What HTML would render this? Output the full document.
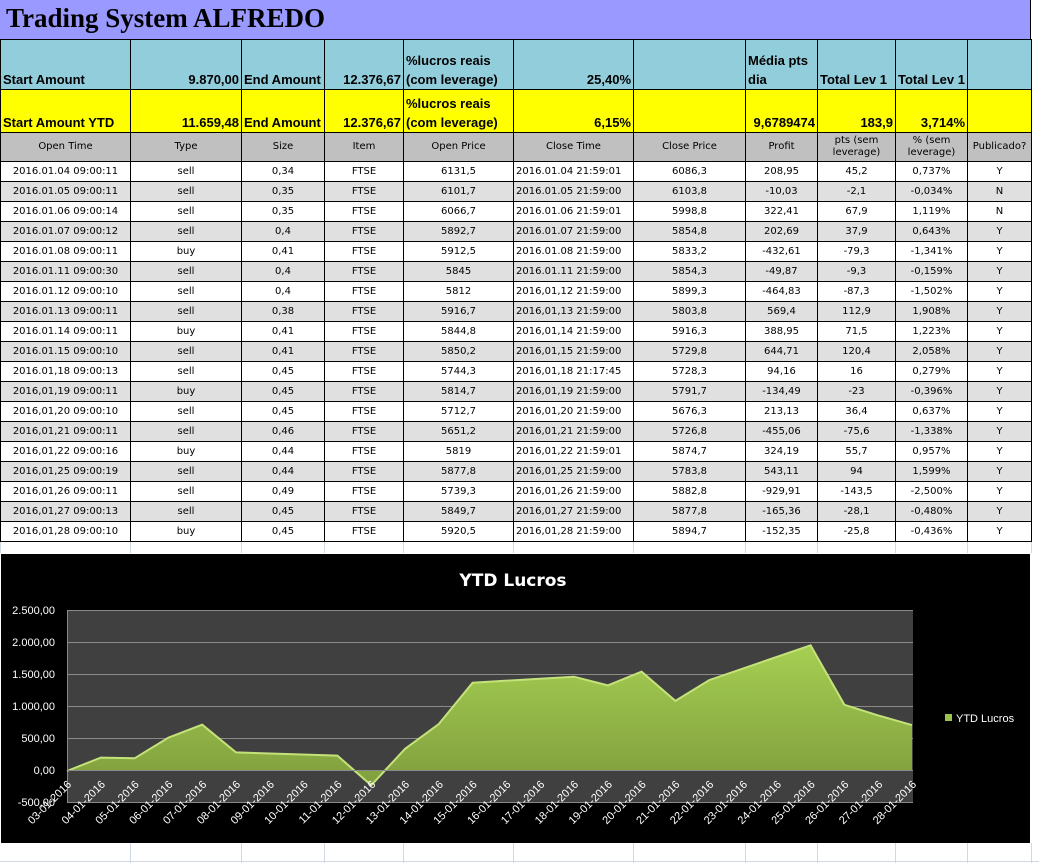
<!DOCTYPE html>
<html><head><meta charset="utf-8"><style>
body{margin:0;width:1039px;height:863px;background:#fff;position:relative;overflow:hidden;font-family:"DejaVu Sans","Liberation Sans",sans-serif}
.title{position:absolute;left:0;top:0;width:1031px;height:39px;background:#9999ff;border-right:1px solid #000;box-sizing:border-box}
.title span{position:absolute;left:6px;top:3px;font:bold 27px "Liberation Serif",serif;color:#000}
table{position:absolute;left:0;top:39px;border-collapse:collapse;table-layout:fixed;width:1032px}
td{border:1px solid #000;padding:0 2px;font-size:10px;text-align:center;white-space:nowrap;overflow:hidden;height:19px;line-height:12px}
tr.b td,tr.y td{vertical-align:bottom;font-weight:bold;font-size:13px;line-height:19px;text-align:left;white-space:nowrap;font-family:"Liberation Sans",sans-serif}
tr.b td{background:#92cddc;height:49px}
tr.y td{background:#ffff00;height:42px}
tr.b td.w,tr.y td.w{white-space:normal}
tr.b td.r,tr.y td.r{text-align:right}
tr.h td{background:#c0c0c0;height:28px;font-size:10px;line-height:12px;white-space:normal}
tr.g td{background:#e0e0e0}
td.l{text-align:left}
tr.e td{border:none;border-left:1px solid #d0d7e5;height:11px}
</style></head><body>
<div class="title"><span>Trading System ALFREDO</span></div>
<table>
<colgroup><col style="width:130px"><col style="width:111px"><col style="width:83px"><col style="width:79px"><col style="width:110px"><col style="width:120px"><col style="width:112px"><col style="width:72px"><col style="width:78px"><col style="width:72px"><col style="width:64px"></colgroup>
<tr class="b"><td>Start Amount</td><td class="r">9.870,00</td><td>End Amount</td><td class="r">12.376,67</td><td class="w">%lucros reais (com leverage)</td><td class="r">25,40%</td><td></td><td class="w">Média pts dia</td><td>Total Lev 1</td><td>Total Lev 1</td><td></td></tr>
<tr class="y"><td>Start Amount YTD</td><td class="r">11.659,48</td><td>End Amount</td><td class="r">12.376,67</td><td class="w">%lucros reais (com leverage)</td><td class="r">6,15%</td><td></td><td class="r">9,6789474</td><td class="r">183,9</td><td class="r">3,714%</td><td></td></tr>
<tr class="h"><td>Open Time</td><td>Type</td><td>Size</td><td>Item</td><td>Open Price</td><td>Close Time</td><td>Close Price</td><td>Profit</td><td>pts (sem leverage)</td><td>% (sem leverage)</td><td>Publicado?</td></tr>
<tr><td>2016.01.04 09:00:11</td><td>sell</td><td>0,34</td><td>FTSE</td><td>6131,5</td><td class="l">2016.01.04 21:59:01</td><td>6086,3</td><td>208,95</td><td>45,2</td><td>0,737%</td><td>Y</td></tr>
<tr class="g"><td>2016.01.05 09:00:11</td><td>sell</td><td>0,35</td><td>FTSE</td><td>6101,7</td><td class="l">2016.01.05 21:59:00</td><td>6103,8</td><td>-10,03</td><td>-2,1</td><td>-0,034%</td><td>N</td></tr>
<tr><td>2016.01.06 09:00:14</td><td>sell</td><td>0,35</td><td>FTSE</td><td>6066,7</td><td class="l">2016.01.06 21:59:01</td><td>5998,8</td><td>322,41</td><td>67,9</td><td>1,119%</td><td>N</td></tr>
<tr class="g"><td>2016.01.07 09:00:12</td><td>sell</td><td>0,4</td><td>FTSE</td><td>5892,7</td><td class="l">2016.01.07 21:59:00</td><td>5854,8</td><td>202,69</td><td>37,9</td><td>0,643%</td><td>Y</td></tr>
<tr><td>2016.01.08 09:00:11</td><td>buy</td><td>0,41</td><td>FTSE</td><td>5912,5</td><td class="l">2016.01.08 21:59:00</td><td>5833,2</td><td>-432,61</td><td>-79,3</td><td>-1,341%</td><td>Y</td></tr>
<tr class="g"><td>2016.01.11 09:00:30</td><td>sell</td><td>0,4</td><td>FTSE</td><td>5845</td><td class="l">2016.01.11 21:59:00</td><td>5854,3</td><td>-49,87</td><td>-9,3</td><td>-0,159%</td><td>Y</td></tr>
<tr><td>2016.01.12 09:00:10</td><td>sell</td><td>0,4</td><td>FTSE</td><td>5812</td><td class="l">2016,01,12 21:59:00</td><td>5899,3</td><td>-464,83</td><td>-87,3</td><td>-1,502%</td><td>Y</td></tr>
<tr class="g"><td>2016.01.13 09:00:11</td><td>sell</td><td>0,38</td><td>FTSE</td><td>5916,7</td><td class="l">2016,01,13 21:59:00</td><td>5803,8</td><td>569,4</td><td>112,9</td><td>1,908%</td><td>Y</td></tr>
<tr><td>2016.01.14 09:00:11</td><td>buy</td><td>0,41</td><td>FTSE</td><td>5844,8</td><td class="l">2016,01,14 21:59:00</td><td>5916,3</td><td>388,95</td><td>71,5</td><td>1,223%</td><td>Y</td></tr>
<tr class="g"><td>2016.01.15 09:00:10</td><td>sell</td><td>0,41</td><td>FTSE</td><td>5850,2</td><td class="l">2016,01,15 21:59:00</td><td>5729,8</td><td>644,71</td><td>120,4</td><td>2,058%</td><td>Y</td></tr>
<tr><td>2016.01,18 09:00:13</td><td>sell</td><td>0,45</td><td>FTSE</td><td>5744,3</td><td class="l">2016,01,18 21:17:45</td><td>5728,3</td><td>94,16</td><td>16</td><td>0,279%</td><td>Y</td></tr>
<tr class="g"><td>2016,01,19 09:00:11</td><td>buy</td><td>0,45</td><td>FTSE</td><td>5814,7</td><td class="l">2016,01,19 21:59:00</td><td>5791,7</td><td>-134,49</td><td>-23</td><td>-0,396%</td><td>Y</td></tr>
<tr><td>2016,01,20 09:00:10</td><td>sell</td><td>0,45</td><td>FTSE</td><td>5712,7</td><td class="l">2016,01,20 21:59:00</td><td>5676,3</td><td>213,13</td><td>36,4</td><td>0,637%</td><td>Y</td></tr>
<tr class="g"><td>2016,01,21 09:00:11</td><td>sell</td><td>0,46</td><td>FTSE</td><td>5651,2</td><td class="l">2016,01,21 21:59:00</td><td>5726,8</td><td>-455,06</td><td>-75,6</td><td>-1,338%</td><td>Y</td></tr>
<tr><td>2016,01,22 09:00:16</td><td>buy</td><td>0,44</td><td>FTSE</td><td>5819</td><td class="l">2016,01,22 21:59:01</td><td>5874,7</td><td>324,19</td><td>55,7</td><td>0,957%</td><td>Y</td></tr>
<tr class="g"><td>2016,01,25 09:00:19</td><td>sell</td><td>0,44</td><td>FTSE</td><td>5877,8</td><td class="l">2016,01,25 21:59:00</td><td>5783,8</td><td>543,11</td><td>94</td><td>1,599%</td><td>Y</td></tr>
<tr><td>2016,01,26 09:00:11</td><td>sell</td><td>0,49</td><td>FTSE</td><td>5739,3</td><td class="l">2016,01,26 21:59:00</td><td>5882,8</td><td>-929,91</td><td>-143,5</td><td>-2,500%</td><td>Y</td></tr>
<tr class="g"><td>2016,01,27 09:00:13</td><td>sell</td><td>0,45</td><td>FTSE</td><td>5849,7</td><td class="l">2016,01,27 21:59:00</td><td>5877,8</td><td>-165,36</td><td>-28,1</td><td>-0,480%</td><td>Y</td></tr>
<tr><td>2016,01,28 09:00:10</td><td>buy</td><td>0,45</td><td>FTSE</td><td>5920,5</td><td class="l">2016,01,28 21:59:00</td><td>5894,7</td><td>-152,35</td><td>-25,8</td><td>-0,436%</td><td>Y</td></tr>
<tr class="e"><td></td><td></td><td></td><td></td><td></td><td></td><td></td><td></td><td></td><td></td><td style="border-right:1px solid #d0d7e5"></td></tr>
</table>
<svg width="1039" height="20" style="position:absolute;top:843px;left:0">
<g stroke="#d0d7e5"><line x1="0" y1="18.5" x2="1039" y2="18.5"/><line x1="130.5" y1="0" x2="130.5" y2="20"/><line x1="241.5" y1="0" x2="241.5" y2="20"/><line x1="324.5" y1="0" x2="324.5" y2="20"/><line x1="403.5" y1="0" x2="403.5" y2="20"/><line x1="513.5" y1="0" x2="513.5" y2="20"/><line x1="633.5" y1="0" x2="633.5" y2="20"/><line x1="745.5" y1="0" x2="745.5" y2="20"/><line x1="817.5" y1="0" x2="817.5" y2="20"/><line x1="895.5" y1="0" x2="895.5" y2="20"/><line x1="967.5" y1="0" x2="967.5" y2="20"/><line x1="1031.5" y1="0" x2="1031.5" y2="20"/></g>
</svg>
<svg width="1039" height="290" style="position:absolute;left:0;top:553px" viewBox="0 553 1039 290">
<defs><linearGradient id="gf" x1="0" y1="0" x2="0" y2="1"><stop offset="0" stop-color="#a6cf52"/><stop offset="1" stop-color="#809e3e"/></linearGradient></defs>
<rect x="1" y="554" width="1029" height="289" fill="#000"/>
<rect x="67" y="610" width="846" height="193" fill="#404040"/>
<g stroke="#8a8a8a" stroke-width="1"><line x1="67" y1="610.5" x2="913" y2="610.5"/><line x1="67" y1="642.5" x2="913" y2="642.5"/><line x1="67" y1="674.5" x2="913" y2="674.5"/><line x1="67" y1="706.5" x2="913" y2="706.5"/><line x1="67" y1="738.5" x2="913" y2="738.5"/><line x1="67" y1="802.5" x2="913" y2="802.5"/><line x1="67.5" y1="610" x2="67.5" y2="803"/></g>
<polygon fill="url(#gf)" points="67,771 100.8,757.6 134.6,758.3 168.4,737.7 202.2,724.7 236,752.4 337.4,755.6 371.2,785.3 405,748.9 438.8,724 472.6,682.7 574,676.7 607.8,685.4 641.6,671.7 675.4,700.9 709.2,680.1 810.6,645.3 844.4,704.8 878.2,715.4 912,725.1 912,771"/>
<polyline fill="none" stroke="#c4e27a" stroke-width="2" points="67,771 100.8,757.6 134.6,758.3 168.4,737.7 202.2,724.7 236,752.4 337.4,755.6 371.2,785.3 405,748.9 438.8,724 472.6,682.7 574,676.7 607.8,685.4 641.6,671.7 675.4,700.9 709.2,680.1 810.6,645.3 844.4,704.8 878.2,715.4 912,725.1"/>
<line x1="67" y1="770.5" x2="913" y2="770.5" stroke="#8a8a8a"/>
<g font-family="Liberation Sans,sans-serif" font-size="11" fill="#fff" text-anchor="end">
<text x="55" y="614">2.500,00</text><text x="55" y="646">2.000,00</text><text x="55" y="678">1.500,00</text><text x="55" y="710">1.000,00</text><text x="55" y="742">500,00</text><text x="55" y="774">0,00</text><text x="55" y="806">-500,00</text>
</g>
<g font-family="Liberation Sans,sans-serif" font-size="11" fill="#fff" text-anchor="end" id="xl"></g>
<text x="513" y="586" font-family="DejaVu Sans,sans-serif" font-weight="bold" font-size="17" fill="#fff" text-anchor="middle">YTD Lucros</text>
<rect x="945" y="714" width="7" height="7" fill="#9bc34a"/>
<text x="956" y="722" font-family="Liberation Sans,sans-serif" font-size="11" fill="#fff">YTD Lucros</text>
</svg>
<script>
var g=document.getElementById('xl'),s='';
for(var i=0;i<26;i++){var d=3+i,x=67+i*33.8+5,y=785;var t=(d<10?'0':'')+d+'-01-2016';s+='<text x="'+x+'" y="'+y+'" transform="rotate(-45 '+x+' '+y+')">'+t+'</text>';}
g.innerHTML=s;
</script>
</body></html>
